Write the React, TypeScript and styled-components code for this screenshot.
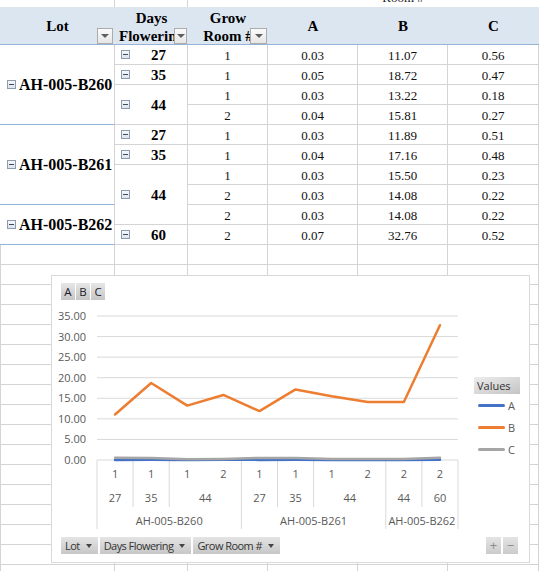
import styled, { createGlobalStyle } from "styled-components";

const GlobalStyle = createGlobalStyle`
  html, body {
    margin: 0;
    padding: 0;
    background: #fff;
  }
  body {
    width: 539px;
    height: 571px;
    overflow: hidden;
  }
`;

const GRID = "#d4d4d4";
const BLUE = "#95b3d7";

const lots = [
  { name: "AH-005-B260", start: 0, span: 4 },
  { name: "AH-005-B261", start: 4, span: 4 },
  { name: "AH-005-B262", start: 8, span: 2 },
];

const days = [
  { v: "27", start: 0, span: 1 },
  { v: "35", start: 1, span: 1 },
  { v: "44", start: 2, span: 2 },
  { v: "27", start: 4, span: 1 },
  { v: "35", start: 5, span: 1 },
  { v: "44", start: 6, span: 3 },
  { v: "60", start: 9, span: 1 },
];

const rows = [
  { g: "1", a: 0.03, b: 11.07, c: 0.56 },
  { g: "1", a: 0.05, b: 18.72, c: 0.47 },
  { g: "1", a: 0.03, b: 13.22, c: 0.18 },
  { g: "2", a: 0.04, b: 15.81, c: 0.27 },
  { g: "1", a: 0.03, b: 11.89, c: 0.51 },
  { g: "1", a: 0.04, b: 17.16, c: 0.48 },
  { g: "1", a: 0.03, b: 15.5, c: 0.23 },
  { g: "2", a: 0.03, b: 14.08, c: 0.22 },
  { g: "2", a: 0.03, b: 14.08, c: 0.22 },
  { g: "2", a: 0.07, b: 32.76, c: 0.52 },
];

const FIRST_ROW = 3; // grid line of first data row
const EMPTY_ROWS = 17;

export default function App() {
  return (
    <Page>
      <GlobalStyle />
      <Sheet>
        {[1, 2, 3, 4, 5, 6].map((c) => (
          <TopCell key={c} $col={c} $line={c <= 2}>
            {c === 5 && <Clipped>Room #</Clipped>}
          </TopCell>
        ))}

        <HeaderCell $col={1}>
          Lot
          <FilterButton $w={16} $right={2}>
            <Caret />
          </FilterButton>
        </HeaderCell>
        <HeaderCell $col={2} $multi>
          Days
          <br />
          Flowering
          <FilterButton $w={13} $right={1}>
            <Caret />
          </FilterButton>
        </HeaderCell>
        <HeaderCell $col={3} $multi>
          Grow
          <br />
          Room #
          <FilterButton $w={17} $right={1}>
            <Caret />
          </FilterButton>
        </HeaderCell>
        <HeaderCell $col={4}>A</HeaderCell>
        <HeaderCell $col={5}>B</HeaderCell>
        <HeaderCell $col={6}>C</HeaderCell>

        {lots.map((l) => (
          <LotCell key={l.name} $row={FIRST_ROW + l.start} $span={l.span} $col={1} $blue>
            <Collapse />
            {l.name}
          </LotCell>
        ))}

        {days.map((d) => (
          <DaysCell key={d.start} $row={FIRST_ROW + d.start} $span={d.span} $col={2}>
            <Collapse />
            <DaysValue>{d.v}</DaysValue>
          </DaysCell>
        ))}

        {rows.map((r, i) => (
          <Row key={i} r={FIRST_ROW + i} data={r} />
        ))}

        {Array.from({ length: EMPTY_ROWS }).map((_, i) =>
          [1, 2, 3, 4, 5, 6].map((c) => (
            <Cell key={`${i}-${c}`} $row={FIRST_ROW + 10 + i} $col={c} $left={c === 1} />
          ))
        )}
      </Sheet>

      <ChartPanel>
        <TopBar>
          <SeriesButton>A</SeriesButton>
          <SeriesButton>B</SeriesButton>
          <SeriesButton>C</SeriesButton>
        </TopBar>
        <ChartBody>
          <LineChart />
          <Legend>
            <LegendTitle>Values</LegendTitle>
            <LegendItem>
              <Swatch $color="#4472c4" />A
            </LegendItem>
            <LegendItem>
              <Swatch $color="#ed7d31" />B
            </LegendItem>
            <LegendItem>
              <Swatch $color="#a5a5a5" />C
            </LegendItem>
          </Legend>
        </ChartBody>
        <BottomBar>
          <FieldGroup>
            <FieldButton>
              Lot <FieldCaret />
            </FieldButton>
            <FieldButton>
              Days Flowering <FieldCaret />
            </FieldButton>
            <FieldButton>
              Grow Room # <FieldCaret />
            </FieldButton>
          </FieldGroup>
          <FieldGroup>
            <ZoomButton>+</ZoomButton>
            <ZoomButton>−</ZoomButton>
          </FieldGroup>
        </BottomBar>
      </ChartPanel>
    </Page>
  );
}

function Row({ r, data }: { r: number; data: (typeof rows)[number] }) {
  return (
    <>
      <ValueCell $row={r} $col={3}>
        {data.g}
      </ValueCell>
      <ValueCell $row={r} $col={4}>
        {data.a.toFixed(2)}
      </ValueCell>
      <ValueCell $row={r} $col={5}>
        {data.b.toFixed(2)}
      </ValueCell>
      <ValueCell $row={r} $col={6}>
        {data.c.toFixed(2)}
      </ValueCell>
    </>
  );
}

// chart geometry (svg coords)
const X0 = 45;
const CW = 36.1;
const Y0 = 160;
const K = 144 / 35;
const cx = (i: number) => X0 + CW * (i + 0.5);
const bx = (i: number) => X0 + CW * i;
const vy = (v: number) => Y0 - v * K;
const pts = (key: "a" | "b" | "c") => rows.map((r, i) => `${cx(i)},${vy(r[key])}`).join(" ");

function LineChart() {
  const ticks = [0, 1, 2, 3, 4, 5, 6, 7];
  const shortSep = [1, 2, 5, 6, 9];
  const longSep = [0, 4, 8, 10];
  const dayLabels = [
    { v: "27", x: cx(0) },
    { v: "35", x: cx(1) },
    { v: "44", x: bx(3) },
    { v: "27", x: cx(4) },
    { v: "35", x: cx(5) },
    { v: "44", x: bx(7) },
    { v: "44", x: cx(8) },
    { v: "60", x: cx(9) },
  ];
  const lotLabels = [
    { v: "AH-005-B260", x: bx(2) },
    { v: "AH-005-B261", x: bx(6) },
    { v: "AH-005-B262", x: bx(9) },
  ];
  return (
    <PlotSvg width={421} height={236} viewBox="0 0 421 236">
      {ticks.map((k) => {
        const y = Y0 - k * (144 / 7);
        return (
          <g key={k}>
            <line x1={X0} x2={bx(10)} y1={y} y2={y} stroke="#d9d9d9" strokeWidth={1} />
            <text x={34} y={y + 4} textAnchor="end">
              {(k * 5).toFixed(2)}
            </text>
          </g>
        );
      })}
      {shortSep.map((i) => (
        <line key={`s${i}`} x1={bx(i)} x2={bx(i)} y1={Y0} y2={207} stroke="#d9d9d9" />
      ))}
      {longSep.map((i) => (
        <line key={`l${i}`} x1={bx(i)} x2={bx(i)} y1={Y0} y2={229} stroke="#d9d9d9" />
      ))}
      {rows.map((r, i) => (
        <text key={`g${i}`} x={cx(i)} y={178} textAnchor="middle">
          {r.g}
        </text>
      ))}
      {dayLabels.map((d, i) => (
        <text key={`d${i}`} x={d.x} y={202} textAnchor="middle">
          {d.v}
        </text>
      ))}
      {lotLabels.map((l) => (
        <text key={l.v} x={l.x} y={225} textAnchor="middle">
          {l.v}
        </text>
      ))}
      <polyline points={pts("a")} fill="none" stroke="#4472c4" strokeWidth={2.5} strokeLinejoin="round" strokeLinecap="round" />
      <polyline points={pts("b")} fill="none" stroke="#ed7d31" strokeWidth={2.5} strokeLinejoin="round" strokeLinecap="round" />
      <polyline points={pts("c")} fill="none" stroke="#a5a5a5" strokeWidth={2.5} strokeLinejoin="round" strokeLinecap="round" />
    </PlotSvg>
  );
}

const Page = styled.div`
  position: relative;
  width: 539px;
  height: 571px;
  overflow: hidden;
  background: #fff;
`;

const Sheet = styled.div`
  display: grid;
  grid-template-columns: 115px 73px 80px 90px 90px 91px;
  grid-template-rows: 7px 38px;
  grid-auto-rows: 20px;
  height: 571px;
  overflow: hidden;
  font-family: "Liberation Serif", "Times New Roman", serif;
  color: #000;
`;

const TopCell = styled.div<{ $col: number; $line?: boolean }>`
  grid-row: 1;
  grid-column: ${(p) => p.$col};
  border-right: ${(p) => (p.$line ? `1px solid ${GRID}` : "none")};
  overflow: hidden;
  text-align: center;
`;

const Clipped = styled.div`
  font-size: 13px;
  line-height: 13px;
  margin-top: -9px;
  color: #222;
`;

const HeaderCell = styled.div<{ $col: number; $multi?: boolean }>`
  grid-row: 2;
  grid-column: ${(p) => p.$col};
  position: relative;
  box-sizing: border-box;
  display: flex;
  justify-content: center;
  align-items: ${(p) => (p.$multi ? "flex-start" : "center")};
  padding-top: ${(p) => (p.$multi ? "2px" : "0")};
  background: #dce6f1;
  border-bottom: 1px solid ${BLUE};
  font-size: 15px;
  font-weight: bold;
  line-height: 18px;
  text-align: center;
  white-space: nowrap;
`;

const FilterButton = styled.div<{ $w: number; $right: number }>`
  position: absolute;
  right: ${(p) => p.$right}px;
  bottom: 0;
  width: ${(p) => p.$w}px;
  height: 16px;
  box-sizing: border-box;
  border: 1px solid #acacac;
  background: linear-gradient(to bottom, #fbfbfb, #e6e6e6);
  display: flex;
  align-items: center;
  justify-content: center;
`;

const Caret = styled.span`
  width: 0;
  height: 0;
  border-left: 4px solid transparent;
  border-right: 4px solid transparent;
  border-top: 4px solid #5f5f5f;
`;

const Cell = styled.div<{ $row: number; $col: number; $span?: number; $blue?: boolean; $left?: boolean }>`
  grid-row: ${(p) => p.$row} / span ${(p) => p.$span ?? 1};
  grid-column: ${(p) => p.$col};
  box-sizing: border-box;
  min-width: 0;
  border-right: 1px solid ${GRID};
  border-bottom: 1px solid ${(p) => (p.$blue ? BLUE : GRID)};
  border-left: ${(p) => (p.$left ? `1px solid ${GRID}` : "none")};
`;

const ValueCell = styled(Cell)`
  font-size: 13px;
  line-height: 21px;
  text-align: center;
  color: #111;
`;

const LotCell = styled(Cell)`
  display: flex;
  align-items: center;
  gap: 3px;
  padding-left: 7px;
  font-size: 16px;
  font-weight: bold;
  white-space: nowrap;
`;

const DaysCell = styled(Cell)`
  display: flex;
  align-items: center;
  padding-left: 6px;
  font-size: 15px;
  font-weight: bold;
`;

const DaysValue = styled.span`
  flex: 1;
  text-align: center;
  padding-top: 2px;
`;

const Collapse = styled.span`
  position: relative;
  flex: none;
  width: 9px;
  height: 9px;
  box-sizing: border-box;
  border: 1px solid #8d9bb0;
  background: linear-gradient(to bottom, #f6f8fb, #dde3eb);

  &::after {
    content: "";
    position: absolute;
    left: 1px;
    right: 1px;
    top: 3px;
    height: 1px;
    background: #3e4b5e;
  }
`;

const ChartPanel = styled.div`
  position: absolute;
  left: 51px;
  top: 275px;
  width: 479px;
  height: 288px;
  box-sizing: border-box;
  border: 1px solid #d9d9d9;
  background: #fff;
  display: flex;
  flex-direction: column;
  font-family: "Open Sans", "Segoe UI", sans-serif;
  color: #595959;
`;

const TopBar = styled.div`
  display: flex;
  gap: 1px;
  height: 17px;
  margin: 7px 0 0 9px;
`;

const SeriesButton = styled.div`
  width: 14px;
  height: 17px;
  background: linear-gradient(to bottom, #e6e6e6, #c6c6c6);
  color: #1c1c2c;
  font-size: 11.5px;
  line-height: 17px;
  text-align: center;
`;

const ChartBody = styled.div`
  display: flex;
  height: 236px;
`;

const PlotSvg = styled.svg`
  display: block;
  flex: none;
  font-family: "Open Sans", "Segoe UI", sans-serif;
  font-size: 11px;
  fill: #595959;
`;

const Legend = styled.div`
  display: flex;
  flex-direction: column;
  margin: 77px 0 0 1px;
`;

const LegendTitle = styled.div`
  width: 46px;
  height: 17px;
  box-sizing: border-box;
  padding-left: 3px;
  background: linear-gradient(to bottom right, #ededed, #c4c4c4);
  color: #333;
  font-size: 11px;
  line-height: 17px;
`;

const LegendItem = styled.div`
  display: flex;
  align-items: center;
  height: 22px;
  font-size: 11px;
  color: #595959;
`;

const Swatch = styled.span<{ $color: string }>`
  width: 27px;
  height: 3px;
  border-radius: 2px;
  margin: 0 3px 0 4px;
  background: ${(p) => p.$color};
`;

const BottomBar = styled.div`
  display: flex;
  justify-content: space-between;
  height: 17px;
  margin: 1px 11px 0 9px;
`;

const FieldGroup = styled.div`
  display: flex;
  gap: 2px;
`;

const FieldButton = styled.div`
  display: flex;
  align-items: center;
  gap: 6px;
  height: 17px;
  padding: 0 6px 0 4px;
  background: linear-gradient(to bottom, #e4e4e4, #c7c7c7);
  color: #333;
  font-size: 11px;
  letter-spacing: -0.55px;
  white-space: nowrap;
`;

const FieldCaret = styled.span`
  width: 0;
  height: 0;
  border-left: 3.5px solid transparent;
  border-right: 3.5px solid transparent;
  border-top: 4px solid #444;
`;

const ZoomButton = styled.div`
  width: 15px;
  height: 17px;
  background: linear-gradient(to bottom, #e4e4e4, #cbcbcb);
  color: #8a8a8a;
  font-size: 13px;
  line-height: 16px;
  text-align: center;
`;
